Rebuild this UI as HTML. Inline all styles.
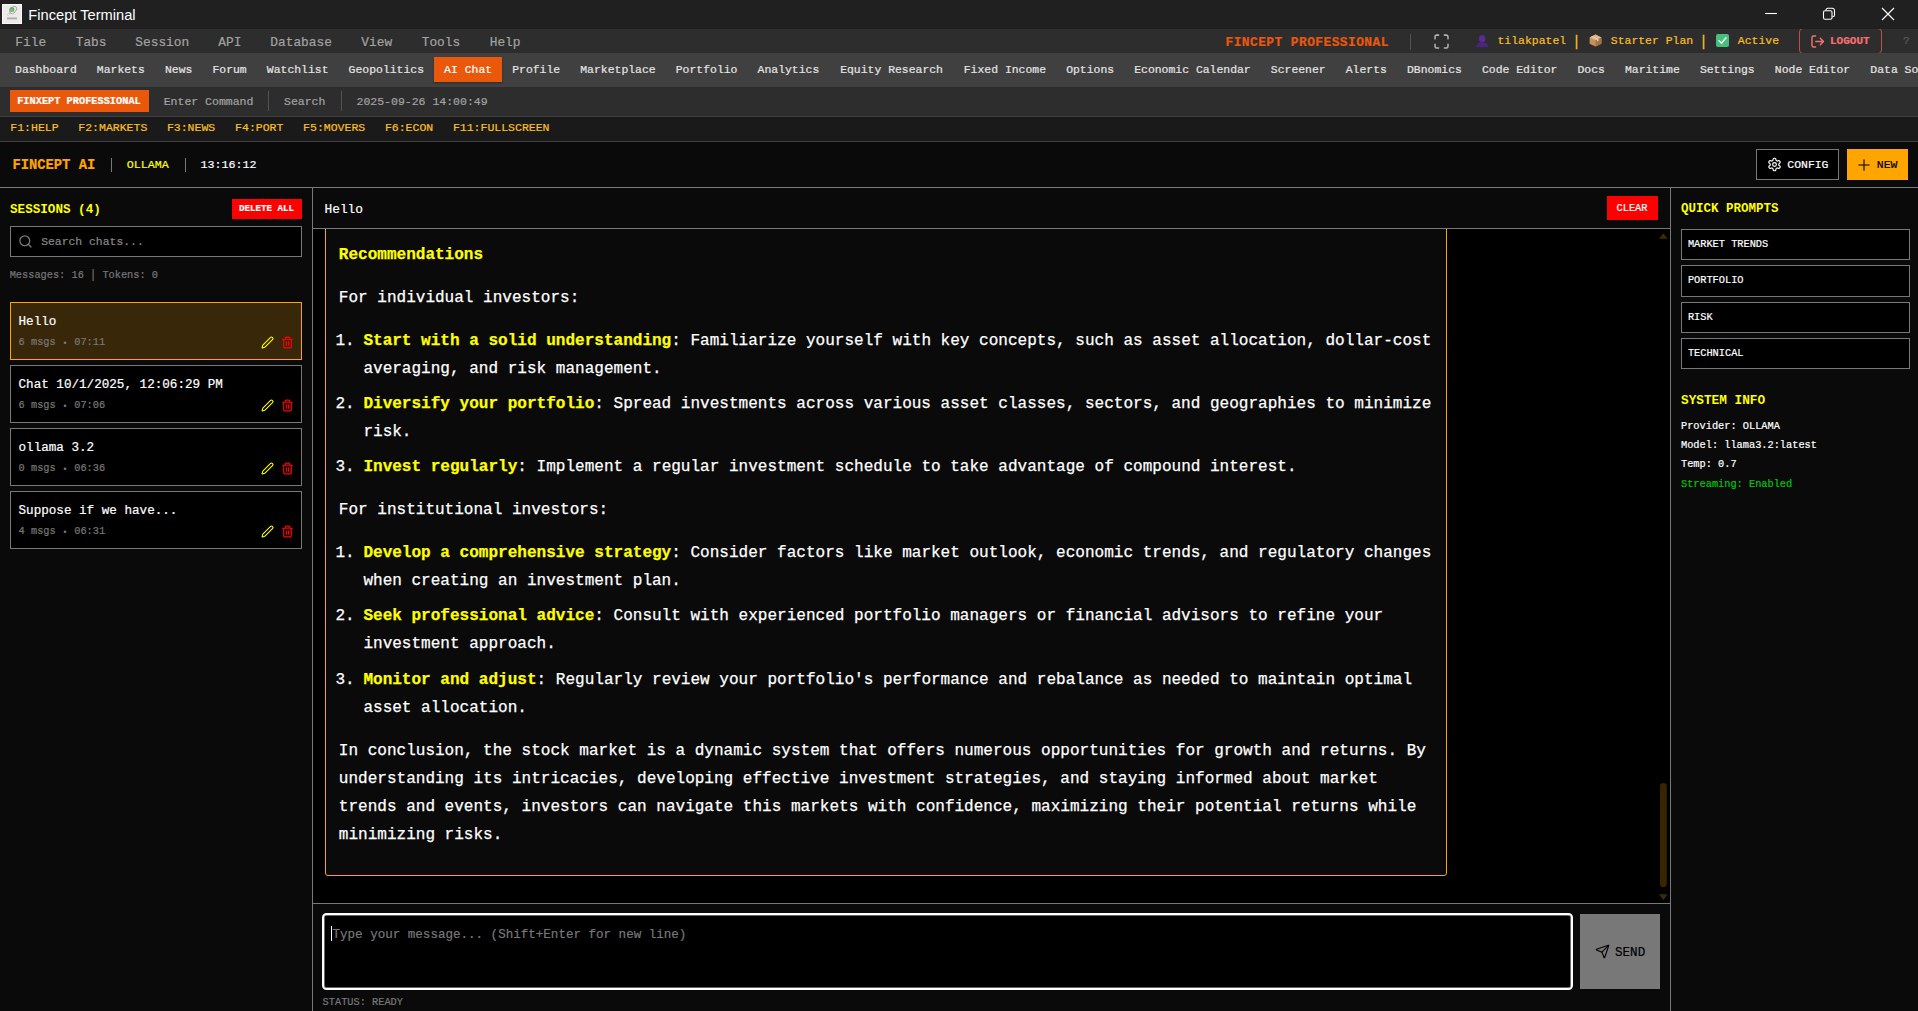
<!DOCTYPE html>
<html lang="en">
<head>
<meta charset="utf-8">
<title>Fincept Terminal</title>
<style>
*{box-sizing:border-box;margin:0;padding:0}
html,body{width:1918px;height:1011px;overflow:hidden;background:#0a0a0a}
body{position:relative;font-family:"Liberation Mono","DejaVu Sans Mono",monospace;color:#fff;-webkit-text-stroke:.2px}
.abs{position:absolute}
svg{display:block}
s{display:inline-block;text-decoration:none;transform:translateY(.9px) scaleY(1.200);-webkit-text-stroke:.45px}
.sm s{transform:translateY(-.5px) scaleY(1.200);-webkit-text-stroke:.15px}
/* ---------- window title bar ---------- */
#titlebar{position:absolute;left:0;top:0;width:1918px;height:29px;background:#202020}
#appicon{position:absolute;left:2px;top:4px;width:20px;height:20px;background:#efeaea}
#title{position:absolute;left:28.3px;top:.5px;-webkit-text-stroke:0;height:29px;line-height:29px;font-family:"Liberation Sans",sans-serif;font-size:14.67px;color:#fff;white-space:nowrap}
#winctl{position:absolute;right:0;top:0;width:180px;height:29px}
/* ---------- menu bar ---------- */
#menubar{position:absolute;left:0;top:29px;width:1918px;height:24px;background:#2d2d2d;overflow:hidden}
#menubar .m{position:absolute;top:1.75px;height:24px;line-height:24px;font-size:12.833px;color:#a3a3a3;white-space:nowrap}
#brand{position:absolute;top:1.75px;left:1225.5px;height:24px;line-height:24px;font-size:12.833px;letter-spacing:.47px;font-weight:bold;color:#ea580c;white-space:nowrap}
.vsep{position:absolute;width:1px;background:#525252}
#user{position:absolute;top:0;height:24px;line-height:23px;font-size:11.458px;color:#fbbf24;white-space:nowrap}
#logout{position:absolute;left:1799px;top:-1px;width:83px;height:26px;border:1px solid #b9504d;border-radius:4px}
#logout span{position:absolute;left:30px;top:1px;line-height:23px;font-size:11px;font-weight:bold;color:#f87171;white-space:nowrap}
#helpq{position:absolute;left:1903px;top:0;line-height:24px;font-size:11.458px;color:#5a5a5a}
/* ---------- tab bar ---------- */
#tabbar{position:absolute;left:0;top:53px;width:1918px;height:34px;background:#404040;overflow:hidden;white-space:nowrap;padding:4px 0 0 5px;display:flex}
#tabbar .t{flex:none;height:25px;line-height:25.5px;padding:0 10.047px;font-size:11.4375px;color:#e5e5e5;white-space:nowrap}
#tabbar .t.on{background:#ea580c;color:#fff;box-shadow:0 1px 2px rgba(0,0,0,.35)}
/* ---------- command bar ---------- */
#cmdbar{position:absolute;left:0;top:87px;width:1918px;height:29px;background:#2d2d2d}
#chip{position:absolute;left:10px;top:3px;width:139px;height:22px;background:#ea580c;color:#fff;font-weight:bold;font-size:10.3px;line-height:22.5px;padding-left:7.2px;white-space:nowrap}
#cmdbar .c{position:absolute;top:.75px;height:29px;line-height:28px;font-size:11.5px;color:#a3a3a3;white-space:nowrap}
/* ---------- fn bar ---------- */
#fnbar{position:absolute;left:0;top:116px;width:1918px;height:26px;background:#1a1a1a;border-top:1px solid #404040;border-bottom:1px solid #404040}
#fnbar span{position:absolute;top:-1px;height:24px;line-height:23px;font-size:11.5px;color:#fbbf24;white-space:nowrap}
/* ---------- AI header ---------- */
#aihead{position:absolute;left:0;top:142px;width:1918px;height:46px;background:#0a0a0a;border-bottom:1px solid #787878}
#aihead .x{position:absolute;top:0;height:45px;line-height:44px;white-space:nowrap}
.btn{position:absolute;display:block}
</style>
</head>
<body>

<!-- ================= window title bar ================= -->
<div id="titlebar">
  <div id="appicon">
    <svg width="20" height="20" viewBox="0 0 20 20"><rect x=".5" y=".5" width="19" height="19" fill="none" stroke="#faf8f8" stroke-width="1"/><ellipse cx="11.200" cy="6" rx="4.300" ry="2.700" fill="none" stroke="#8d8a92" stroke-width=".7" transform="rotate(-50 11.200 6)"/><circle cx="9.900" cy="5.600" r="2.500" fill="#6aaa6e"/><circle cx="9.700" cy="6.200" r="1.100" fill="#86c98a"/><path d="M8.300 8.300 6.600 10" stroke="#a9a5ab" stroke-width=".7"/><path d="M6.300 9.700l.9.900-.9.900-.9-.9z" fill="#fff" stroke="#a9a5ab" stroke-width=".5"/><rect x="5" y="13.200" width="10" height="2.300" fill="#c4bfc1"/><rect x="5" y="14" width="10" height=".7" fill="#aaa5a8"/></svg>
  </div>
  <div id="title">Fincept Terminal</div>
  <svg id="winctl" width="180" height="29" viewBox="0 0 180 29" fill="none" stroke="#fff" stroke-width="1.1">
    <path d="M27 13.5h12"/>
    <rect x="85.500" y="10.800" width="8.500" height="8.500" rx="1.500"/>
    <path d="M88 10.500v-.5a1.700 1.700 0 0 1 1.700-1.700h4.600a2.200 2.200 0 0 1 2.200 2.200v4.600a1.700 1.700 0 0 1-1.700 1.700h-.5"/>
    <path d="M144 8l12 12M156 8l-12 12"/>
  </svg>
</div>

<!-- ================= menu bar ================= -->
<div id="menubar">
  <span class="m" style="left:15.3px">File</span>
  <span class="m" style="left:75.7px">Tabs</span>
  <span class="m" style="left:135.3px">Session</span>
  <span class="m" style="left:218.3px">API</span>
  <span class="m" style="left:270.3px">Database</span>
  <span class="m" style="left:361.3px">View</span>
  <span class="m" style="left:421.7px">Tools</span>
  <span class="m" style="left:489.7px">Help</span>
  <span id="brand">FINCEPT PROFESSIONAL</span>
  <i class="vsep" style="left:1410px;top:5px;height:16px"></i>
  <svg class="abs" style="left:1434px;top:4.500px" width="15" height="15" viewBox="0 0 15 14" preserveAspectRatio="none" fill="none" stroke="#b4b4b4" stroke-width="1.500" stroke-linecap="round" stroke-linejoin="round"><path d="M1 4.5V2.6A1.6 1.6 0 0 1 2.6 1H4.6M10.4 1h2A1.6 1.6 0 0 1 14 2.6v1.9M14 9.5v1.9a1.6 1.6 0 0 1-1.6 1.6h-2M4.6 13h-2A1.6 1.6 0 0 1 1 11.400V9.5"/></svg>
  <!-- user / plan / status -->
  <svg class="abs" style="left:1476px;top:5.500px" width="12.500" height="12.800" viewBox="0 0 12.500 12.500"><ellipse cx="6.200" cy="3.600" rx="3.200" ry="3.700" fill="#5a2c93"/><path d="M0 12.300c0-2.900 1.700-4.200 4.300-4.700l.5-1.300h2.800l.5 1.300c2.600.5 4.300 1.800 4.300 4.700z" fill="#4b2383"/></svg>
  <span id="user" style="left:1497.5px">tilakpatel <s>|</s> <span style="display:inline-block;width:17.2px"></span> Starter Plan <s>|</s> <span style="display:inline-block;width:17.2px"></span> Active</span>
  <svg class="abs" style="left:1589px;top:5px" width="13" height="13" viewBox="0 0 13 13"><path d="M6.500.6 12.400 3.400v6.300L6.500 12.500.6 9.700V3.400z" fill="#c4915f"/><path d="M6.500 6.200 12.400 3.400v6.300L6.500 12.500z" fill="#a57246"/><path d="M6.500.6 12.400 3.400 6.500 6.200.6 3.400z" fill="#dcb58a"/><path d="M3.300 2 9.400 4.900v2l-1.300.6v-2L2.100 2.600z" fill="#e9d3b0"/></svg>
  <svg class="abs" style="left:1716px;top:4.700px" width="13" height="13" viewBox="0 0 13 13"><rect width="13" height="13" rx="2" fill="#45c07c"/><path d="M3 6.800 5.500 9.300 10 3.800" fill="none" stroke="#fff" stroke-width="1.400" stroke-linecap="round" stroke-linejoin="round"/></svg>
  <div id="logout">
    <svg class="abs" style="left:11px;top:6px" width="14" height="13" viewBox="0 0 14 13" fill="none" stroke="#f87171" stroke-width="1.400" stroke-linecap="round" stroke-linejoin="round"><path d="M4.600 12H2.400A1.400 1.400 0 0 1 1 10.600V2.400A1.400 1.400 0 0 1 2.400 1h2.200M9.300 9.700 12.500 6.500 9.300 3.300M12.500 6.500H4.800"/></svg>
    <span>LOGOUT</span>
  </div>
  <span id="helpq">?</span>
</div>

<!-- ================= tab bar ================= -->
<div id="tabbar">
  <span class="t">Dashboard</span><span class="t">Markets</span><span class="t">News</span><span class="t">Forum</span><span class="t">Watchlist</span><span class="t">Geopolitics</span><span class="t on">AI Chat</span><span class="t">Profile</span><span class="t">Marketplace</span><span class="t">Portfolio</span><span class="t">Analytics</span><span class="t" style="margin-left:.8px">Equity Research</span><span class="t" style="margin-left:.7px">Fixed Income</span><span class="t">Options</span><span class="t">Economic Calendar</span><span class="t">Screener</span><span class="t">Alerts</span><span class="t">DBnomics</span><span class="t">Code Editor</span><span class="t">Docs</span><span class="t">Maritime</span><span class="t">Settings</span><span class="t">Node Editor</span><span class="t">Data Sources</span>
</div>

<!-- ================= command bar ================= -->
<div id="cmdbar">
  <div id="chip">FINXEPT PROFESSIONAL</div>
  <span class="c" style="left:163.700px">Enter Command</span>
  <i class="vsep" style="left:268px;top:4px;height:20px"></i>
  <span class="c" style="left:284px">Search</span>
  <i class="vsep" style="left:341px;top:4px;height:20px"></i>
  <span class="c" style="left:356.500px">2025-09-26 14:00:49</span>
</div>

<!-- ================= function key bar ================= -->
<div id="fnbar">
  <span style="left:10.3px">F1:HELP</span>
  <span style="left:78.3px">F2:MARKETS</span>
  <span style="left:166.9px">F3:NEWS</span>
  <span style="left:235.1px">F4:PORT</span>
  <span style="left:303.1px">F5:MOVERS</span>
  <span style="left:384.9px">F6:ECON</span>
  <span style="left:452.9px">F11:FULLSCREEN</span>
</div>

<!-- ================= AI header ================= -->
<div id="aihead">
  <span class="x" style="left:12.400px;top:1.500px;font-size:13.800px;font-weight:bold;color:#ffa500">FINCEPT AI</span>
  <i class="vsep" style="left:111px;top:16px;height:14px;background:#787878"></i>
  <span class="x" style="left:126.800px;top:.8px;font-size:11.667px;color:#ffff00">OLLAMA</span>
  <i class="vsep" style="left:185px;top:16px;height:14px;background:#787878"></i>
  <span class="x" style="left:200.600px;top:.8px;font-size:11.667px;color:#fff">13:16:12</span>
  <div class="btn" style="left:1756px;top:7px;width:83px;height:31px;background:#000;border:1px solid #787878">
    <svg class="abs" style="left:10px;top:7px" width="15" height="15" viewBox="0 0 24 24" fill="none" stroke="#fff" stroke-width="1.900" stroke-linecap="round" stroke-linejoin="round"><path d="M12.220 2h-.44a2 2 0 0 0-2 2v.180a2 2 0 0 1-1 1.730l-.43.250a2 2 0 0 1-2 0l-.15-.080a2 2 0 0 0-2.730.730l-.22.380a2 2 0 0 0 .73 2.730l.15.100a2 2 0 0 1 1 1.720v.510a2 2 0 0 1-1 1.740l-.15.090a2 2 0 0 0-.73 2.730l.22.380a2 2 0 0 0 2.730.730l.15-.080a2 2 0 0 1 2 0l.43.250a2 2 0 0 1 1 1.730V20a2 2 0 0 0 2 2h.44a2 2 0 0 0 2-2v-.180a2 2 0 0 1 1-1.730l.43-.250a2 2 0 0 1 2 0l.15.080a2 2 0 0 0 2.730-.730l.22-.390a2 2 0 0 0-.73-2.730l-.15-.080a2 2 0 0 1-1-1.740v-.500a2 2 0 0 1 1-1.740l.15-.090a2 2 0 0 0 .73-2.730l-.22-.380a2 2 0 0 0-2.730-.730l-.15.080a2 2 0 0 1-2 0l-.43-.250a2 2 0 0 1-1-1.730V4a2 2 0 0 0-2-2z"/><circle cx="12" cy="12" r="3"/></svg>
    <span class="abs" style="left:30.300px;top:0;line-height:29px;font-size:11.458px;color:#fff">CONFIG</span>
  </div>
  <div class="btn" style="left:1847px;top:7px;width:61px;height:31px;background:#ffa500">
    <svg class="abs" style="left:11px;top:9.500px" width="12" height="12" viewBox="0 0 12 12" fill="none" stroke="#000" stroke-width="1.100" stroke-linecap="round"><path d="M6 .8v10.400M.8 6h10.400"/></svg>
    <span class="abs" style="left:29.800px;top:0;line-height:31px;font-size:11.458px;color:#000">NEW</span>
  </div>
</div>


<style>
/* ---------- main layout ---------- */
#left{position:absolute;left:0;top:188px;width:313px;height:823px;background:#0a0a0a;border-right:1px solid #787878}
#chat{position:absolute;left:313px;top:188px;width:1357px;height:823px;background:#0a0a0a}
#right{position:absolute;left:1670px;top:188px;width:248px;height:823px;background:#0a0a0a;border-left:1px solid #787878}
.h{position:absolute;-webkit-text-stroke:0;font-weight:bold;color:#ffff00;font-size:12.750px;line-height:20px;white-space:nowrap}
.sm{font-size:10.300px;white-space:nowrap}
.redbtn{position:absolute;background:#ff0000;color:#fff;text-align:center;white-space:nowrap}
/* sessions */
.sess{position:absolute;left:10px;width:292px;height:58px;background:#000;border:1px solid #787878}
.sess.on{background:#39270a;border-color:#ffa500}
.sess b{position:absolute;left:7.500px;top:8.500px;font-weight:normal;font-size:12.625px;line-height:20px;color:#fff;white-space:nowrap}
.sess i{position:absolute;left:7.600px;top:30.750px;font-style:normal;font-size:10.300px;line-height:16px;color:#787878;white-space:nowrap}
.sess u{display:inline-block;text-decoration:none;transform:translateY(1.700px) scale(.8)}
.sess svg{position:absolute;top:32.750px}
/* chat */
#chathead{position:absolute;left:0;top:0;width:1357px;height:41px;border-bottom:1px solid #787878}
#msgs{position:absolute;left:0;top:41px;width:1357px;height:675px;background:#000;overflow:hidden}
#bubble{position:absolute;left:12px;top:-560px;width:1122px;height:1207px;background:#0a0a0a;border:1px solid #ffa500;border-radius:3px;padding:0 13.400px;font-size:16.040px;line-height:28px;color:#fff;-webkit-text-stroke:.25px}
#bubble h3{position:absolute;left:12.800px;margin-top:.6px;font-size:16.040px;line-height:28px;color:#ffff00;font-weight:bold;white-space:nowrap}
#bubble p{position:absolute;left:12.800px;margin-top:.6px;white-space:nowrap}
#bubble ol{position:absolute;left:13.400px;margin-top:.6px;list-style:none}
#bubble li{position:absolute;left:0;white-space:nowrap}
#bubble li .n{position:absolute;left:-4px}
#bubble li .tx{position:absolute;left:24px}
#bubble strong{color:#ffff00;font-weight:bold}
#inputbar{position:absolute;left:0;top:715px;width:1357px;height:108px;border-top:1px solid #787878;background:#0a0a0a}
#ta{position:absolute;left:9px;top:9px;width:1251px;height:77px;background:#000;border:2px solid #fff;border-radius:4.500px;box-shadow:inset 0 0 0 .8px #8c8782}
#ta span{position:absolute;left:8.500px;top:9.500px;font-size:12.5625px;line-height:20px;color:#787878;white-space:nowrap}
#ta em{position:absolute;left:7px;top:10.500px;width:1.200px;height:15px;background:#fff}
#send{position:absolute;left:1267px;top:10px;width:80px;height:75px;background:#787878}
/* right */
.qp{position:absolute;left:10px;width:229px;height:31px;background:#000;border:1px solid #787878;font-size:10.300px;color:#fff;line-height:28px;padding-left:5.900px;white-space:nowrap}
.si{position:absolute;left:10px;font-size:10.300px;line-height:16px;color:#fff;white-space:nowrap}
</style>

<!-- ================= left: sessions ================= -->
<div id="left">
  <span class="h" style="left:10px;top:11.800px;font-size:12.625px">SESSIONS (4)</span>
  <div class="redbtn" style="left:232px;top:11px;width:70px;height:20px;font-weight:bold;font-size:9.170px;line-height:19px;text-indent:-1px">DELETE ALL</div>
  <div class="abs" style="left:10px;top:38px;width:292px;height:31px;background:#000;border:1px solid #787878">
    <svg class="abs" style="left:6.800px;top:7px" width="14.800" height="14.800" viewBox="0 0 24 24" fill="none" stroke="#787878" stroke-width="2.100" stroke-linecap="round"><circle cx="11" cy="11" r="8"/><path d="M21 21l-4.300-4.300"/></svg>
    <span class="abs" style="left:30.200px;top:.75px;line-height:28px;font-size:11.400px;color:#8a8a8a;white-space:nowrap">Search chats...</span>
  </div>
  <span class="abs sm" style="left:9.700px;top:78.750px;line-height:16px;color:#787878">Messages: 16 <s>|</s> Tokens: 0</span>

  <div class="sess on" style="top:114px"><b>Hello</b><i>6 msgs <u>•</u> 07:11</i>
    <svg style="left:250px" width="13" height="13" viewBox="0 0 24 24" fill="none" stroke="#ffff00" stroke-width="2" stroke-linecap="round" stroke-linejoin="round"><path d="M21.170 6.810a2.820 2.820 0 0 0-3.990-3.990L3.840 16.170a2 2 0 0 0-.5.830l-1.320 4.350a.5.5 0 0 0 .62.620l4.350-1.320a2 2 0 0 0 .83-.5z"/></svg>
    <svg style="left:270px" width="13" height="13" viewBox="0 0 24 24" fill="none" stroke="#ff0000" stroke-width="2.200" stroke-linecap="round" stroke-linejoin="round"><path d="M3 6h18M19 6v14a2 2 0 0 1-2 2H7a2 2 0 0 1-2-2V6M8 6V4a2 2 0 0 1 2-2h4a2 2 0 0 1 2 2v2M10 11v6M14 11v6"/></svg>
  </div>
  <div class="sess" style="top:177px"><b>Chat 10/1/2025, 12:06:29 PM</b><i>6 msgs <u>•</u> 07:06</i>
    <svg style="left:250px" width="13" height="13" viewBox="0 0 24 24" fill="none" stroke="#ffff00" stroke-width="2" stroke-linecap="round" stroke-linejoin="round"><path d="M21.170 6.810a2.820 2.820 0 0 0-3.990-3.990L3.840 16.170a2 2 0 0 0-.5.830l-1.320 4.350a.5.5 0 0 0 .62.620l4.350-1.320a2 2 0 0 0 .83-.5z"/></svg>
    <svg style="left:270px" width="13" height="13" viewBox="0 0 24 24" fill="none" stroke="#ff0000" stroke-width="2.200" stroke-linecap="round" stroke-linejoin="round"><path d="M3 6h18M19 6v14a2 2 0 0 1-2 2H7a2 2 0 0 1-2-2V6M8 6V4a2 2 0 0 1 2-2h4a2 2 0 0 1 2 2v2M10 11v6M14 11v6"/></svg>
  </div>
  <div class="sess" style="top:240px"><b>ollama 3.2</b><i>0 msgs <u>•</u> 06:36</i>
    <svg style="left:250px" width="13" height="13" viewBox="0 0 24 24" fill="none" stroke="#ffff00" stroke-width="2" stroke-linecap="round" stroke-linejoin="round"><path d="M21.170 6.810a2.820 2.820 0 0 0-3.990-3.990L3.840 16.170a2 2 0 0 0-.5.830l-1.320 4.350a.5.5 0 0 0 .62.620l4.350-1.320a2 2 0 0 0 .83-.5z"/></svg>
    <svg style="left:270px" width="13" height="13" viewBox="0 0 24 24" fill="none" stroke="#ff0000" stroke-width="2.200" stroke-linecap="round" stroke-linejoin="round"><path d="M3 6h18M19 6v14a2 2 0 0 1-2 2H7a2 2 0 0 1-2-2V6M8 6V4a2 2 0 0 1 2-2h4a2 2 0 0 1 2 2v2M10 11v6M14 11v6"/></svg>
  </div>
  <div class="sess" style="top:303px"><b>Suppose if we have...</b><i>4 msgs <u>•</u> 06:31</i>
    <svg style="left:250px" width="13" height="13" viewBox="0 0 24 24" fill="none" stroke="#ffff00" stroke-width="2" stroke-linecap="round" stroke-linejoin="round"><path d="M21.170 6.810a2.820 2.820 0 0 0-3.990-3.990L3.840 16.170a2 2 0 0 0-.5.830l-1.320 4.350a.5.5 0 0 0 .62.620l4.350-1.320a2 2 0 0 0 .83-.5z"/></svg>
    <svg style="left:270px" width="13" height="13" viewBox="0 0 24 24" fill="none" stroke="#ff0000" stroke-width="2.200" stroke-linecap="round" stroke-linejoin="round"><path d="M3 6h18M19 6v14a2 2 0 0 1-2 2H7a2 2 0 0 1-2-2V6M8 6V4a2 2 0 0 1 2-2h4a2 2 0 0 1 2 2v2M10 11v6M14 11v6"/></svg>
  </div>
</div>

<!-- ================= centre: chat ================= -->
<div id="chat">
  <div id="chathead">
    <span class="abs" style="left:11.500px;top:11.500px;font-size:12.833px;line-height:20px;color:#fff">Hello</span>
    <div class="redbtn sm" style="left:1294px;top:8px;width:51px;height:24px;line-height:24.500px;text-indent:-1px">CLEAR</div>
  </div>
  <div id="msgs">
    <div id="bubble">
      <h3 style="top:570px">Recommendations</h3>
      <p style="top:613px">For individual investors:</p>
      <ol style="top:656px">
        <li style="top:0"><span class="n">1.</span><span class="tx"><strong>Start with a solid understanding</strong>: Familiarize yourself with key concepts, such as asset allocation, dollar-cost<br>averaging, and risk management.</span></li>
        <li style="top:63.250px"><span class="n">2.</span><span class="tx"><strong>Diversify your portfolio</strong>: Spread investments across various asset classes, sectors, and geographies to minimize<br>risk.</span></li>
        <li style="top:126.500px"><span class="n">3.</span><span class="tx"><strong>Invest regularly</strong>: Implement a regular investment schedule to take advantage of compound interest.</span></li>
      </ol>
      <p style="top:825.500px">For institutional investors:</p>
      <ol style="top:868.500px">
        <li style="top:0"><span class="n">1.</span><span class="tx"><strong>Develop a comprehensive strategy</strong>: Consider factors like market outlook, economic trends, and regulatory changes<br>when creating an investment plan.</span></li>
        <li style="top:63.250px"><span class="n">2.</span><span class="tx"><strong>Seek professional advice</strong>: Consult with experienced portfolio managers or financial advisors to refine your<br>investment approach.</span></li>
        <li style="top:126.500px"><span class="n">3.</span><span class="tx"><strong>Monitor and adjust</strong>: Regularly review your portfolio's performance and rebalance as needed to maintain optimal<br>asset allocation.</span></li>
      </ol>
      <p style="top:1066.500px">In conclusion, the stock market is a dynamic system that offers numerous opportunities for growth and returns. By<br>understanding its intricacies, developing effective investment strategies, and staying informed about market<br>trends and events, investors can navigate this markets with confidence, maximizing their potential returns while<br>minimizing risks.</p>
    </div>
    <!-- scrollbar -->
    <svg class="abs" style="left:1345px;top:0" width="12" height="675" viewBox="0 0 12 675"><path d="M5.300 4.200 9.600 9.800H1z" fill="#3f2a04"/><rect x="2" y="554" width="6.800" height="104.200" rx="3.400" fill="#382503"/><path d="M1 665.300h8.600L5.300 671z" fill="#3f2a04"/></svg>
  </div>
  <div id="inputbar">
    <div id="ta"><em></em><span>Type your message... (Shift+Enter for new line)</span></div>
    <div id="send">
      <svg class="abs" style="left:15px;top:30px" width="15" height="15" viewBox="0 0 24 24" fill="none" stroke="#000" stroke-width="1.800" stroke-linecap="round" stroke-linejoin="round"><path d="M14.536 21.686a.5.5 0 0 0 .937-.024l6.500-19a.496.496 0 0 0-.635-.635l-19 6.500a.5.5 0 0 0-.024.937l7.930 3.180a2 2 0 0 1 1.112 1.110z"/><path d="m21.854 2.147-10.940 10.939"/></svg>
      <span class="abs" style="left:35.100px;top:1.500px;line-height:75px;font-size:12.530px;color:#000;white-space:nowrap">SEND</span>
    </div>
    <span class="abs sm" style="left:9.600px;top:89.750px;line-height:16px;color:#787878">STATUS: READY</span>
  </div>
</div>

<!-- ================= right: quick prompts ================= -->
<div id="right">
  <span class="h" style="left:10px;top:11.400px;font-size:12.500px">QUICK PROMPTS</span>
  <div class="qp" style="top:41px">MARKET TRENDS</div>
  <div class="qp" style="top:77.400px;height:32px;line-height:29.500px">PORTFOLIO</div>
  <div class="qp" style="top:113.700px">RISK</div>
  <div class="qp" style="top:150px">TECHNICAL</div>
  <span class="h" style="left:10px;top:202.700px">SYSTEM INFO</span>
  <span class="si" style="top:230px">Provider: OLLAMA</span>
  <span class="si" style="top:249px">Model: llama3.2:latest</span>
  <span class="si" style="top:268px">Temp: 0.7</span>
  <span class="si" style="top:288px;color:#00c800">Streaming: Enabled</span>
</div>


</body>
</html>
